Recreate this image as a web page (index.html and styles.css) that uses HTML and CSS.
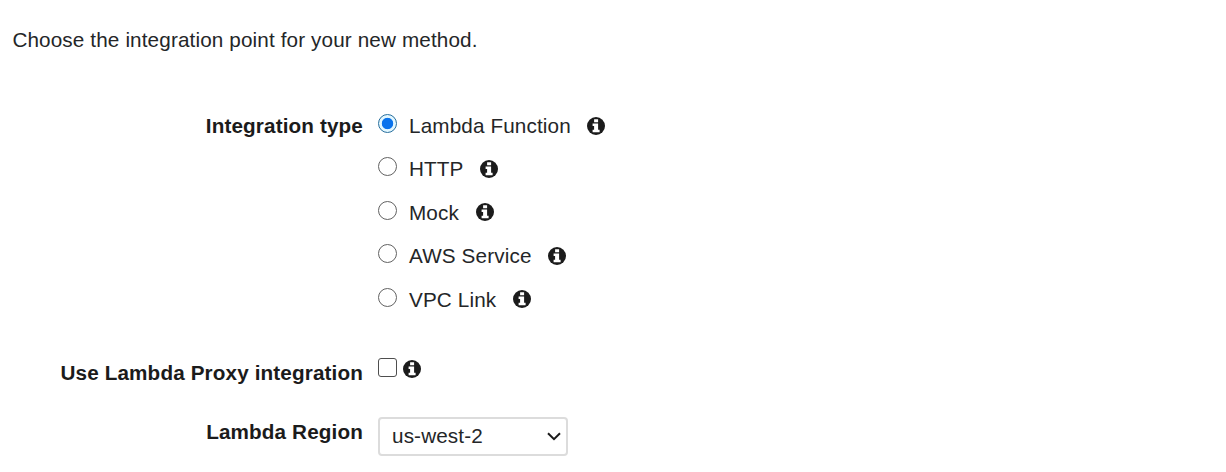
FILE: index.html
```html
<!DOCTYPE html>
<html lang="en">
<head>
<meta charset="utf-8">
<title>Method setup</title>
<link rel="stylesheet" href="styles.css">
</head>
<body>
<svg class="defs" aria-hidden="true">
  <symbol id="info" viewBox="0 0 18 18">
    <circle cx="9" cy="9" r="9" fill="#1b1b1b"/>
    <path d="M7.1 2.2h4v3h-4zM5.6 6.6h5.5v6.1h1.5v2.6h-7v-2.6h1.5V9.1H5.6z" fill="#fff"/>
  </symbol>
</svg>
<main class="page">
  <p class="intro">Choose the integration point for your new method.</p>
  <form class="form">
    <div class="row row-type">
      <span class="label">Integration type</span>
      <div class="options">
        <label class="option"><input class="radio" type="radio" name="type" checked><span>Lambda Function</span><svg class="info"><use href="#info"/></svg></label>
        <label class="option"><input class="radio" type="radio" name="type"><span>HTTP</span><svg class="info"><use href="#info"/></svg></label>
        <label class="option"><input class="radio" type="radio" name="type"><span>Mock</span><svg class="info"><use href="#info"/></svg></label>
        <label class="option"><input class="radio" type="radio" name="type"><span>AWS Service</span><svg class="info"><use href="#info"/></svg></label>
        <label class="option"><input class="radio" type="radio" name="type"><span>VPC Link</span><svg class="info"><use href="#info"/></svg></label>
      </div>
    </div>
    <div class="row row-proxy">
      <span class="label">Use Lambda Proxy integration</span>
      <div class="proxy"><input class="checkbox" type="checkbox" aria-label="Use Lambda Proxy integration"><svg class="info"><use href="#info"/></svg></div>
    </div>
    <div class="row row-region">
      <span class="label">Lambda Region</span>
      <div class="select">
        <span>us-west-2</span>
        <svg class="chevron" viewBox="0 0 14 9"><path d="M1 1.2l6 6 6-6" fill="none" stroke="#1b1b1b" stroke-width="2"/></svg>
      </div>
    </div>
  </form>
</main>
</body>
</html>
```
FILE: styles.css
```css
* { box-sizing: border-box; }
body {
  margin: 0;
  background: #fff;
  color: #242628;
  font: 20.7px/24px "Liberation Sans", Arial, sans-serif;
  letter-spacing: .13px;
}
.defs { display: none; }
.page { padding: 28px 12px 0; }
.intro { margin: 0 0 62px; padding-left: .4px; }
.row {
  display: grid;
  grid-template-columns: 351px 1fr;
  column-gap: 15px;
  align-items: start;
}
.label {
  color: #1b1b1b;
  font-weight: bold;
  text-align: right;
}
.options { display: grid; grid-auto-rows: 43.4px; }
.option { display: flex; align-items: flex-start; }
.option span { margin: 0 16.6px 0 12px; }
.info { display: block; width: 18px; height: 18px; margin-top: 3px; }
.proxy .info { margin-top: 2.5px; }
.option .info { margin-top: 2.6px; }
.radio {
  appearance: none;
  width: 19px;
  height: 19px;
  margin: 0;
  border: 1px solid #626262;
  border-radius: 50%;
  background: #fff;
}
.radio:checked {
  border-color: #286f9e;
  background: radial-gradient(circle, #0872ec 5.3px, #e2f7ff 6.1px);
}
.row-proxy { margin-top: 30px; }
.proxy { display: flex; gap: 6px; margin-top: -3px; }
.checkbox {
  appearance: none;
  width: 19px;
  height: 19px;
  margin: 0;
  border: 1px solid #4e4e4e;
  border-radius: 3px;
}
.row-region { margin-top: 35px; }
.select {
  display: flex;
  align-items: center;
  justify-content: space-between;
  width: 190px;
  height: 39px;
  margin-top: -3px;
  padding: 0 5px 1px 12px;
  border: 2px solid #dcdcdc;
  border-radius: 4px;
}
.chevron { width: 14px; height: 9px; margin-top: 2px; }
```
